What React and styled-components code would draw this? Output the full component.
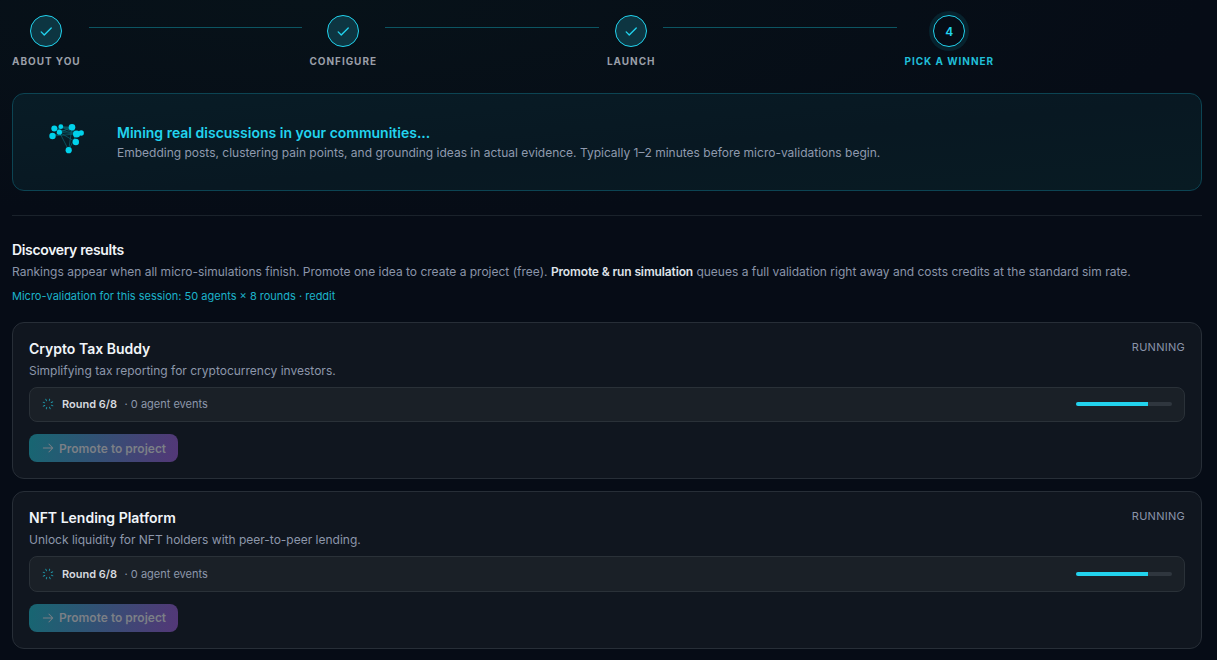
import React from 'react';
import styled, { createGlobalStyle, css } from 'styled-components';
import { PiCheckBold, PiArrowRight, PiSpinner } from 'react-icons/pi';

const GlobalStyle = createGlobalStyle`
  * {
    box-sizing: border-box;
  }

  body {
    margin: 0;
    min-height: 660px;
    background: radial-gradient(ellipse 900px 220px at 25% 0, #071219 0%, rgba(7, 18, 25, 0) 100%), #060c16;
    font-family: Inter, 'Liberation Sans', sans-serif;
    color: #f1f5f9;
    overflow: hidden;
  }

  p, h2, h3 {
    margin: 0;
  }
`;

const Page = styled.main`
  width: 1190px;
  margin-left: 12px;
  padding-top: 15px;
`;

const Steps = styled.ol`
  display: grid;
  grid-template-columns: repeat(4, 1fr);
  margin: 0;
  padding: 0;
  list-style: none;
`;

const Step = styled.li`
  display: flex;
  height: 54px;
`;

const StepMark = styled.div`
  display: flex;
  flex-direction: column;
  align-items: center;
  gap: 8px;
`;

const Circle = styled.span`
  display: flex;
  align-items: center;
  justify-content: center;
  width: 32px;
  height: 32px;
  border: 1px solid #22d3ee;
  border-radius: 50%;
  background: #0d3541;
  color: #22d3ee;
  font-size: 12px;
  font-weight: 600;

  ${({ $current }) =>
    $current &&
    css`
      background: #060c16;
      box-shadow: 0 0 0 4px #07222d;
    `}
`;

const StepLabel = styled.span`
  font-size: 10px;
  font-weight: 650;
  line-height: 13px;
  letter-spacing: 0.95px;
  text-transform: uppercase;
  white-space: nowrap;
  color: ${({ $current }) => ($current ? '#20bfd8' : '#9a9fa8')};
`;

const StepLine = styled.span`
  flex: 1;
  height: 1px;
  margin: 12px 8px 0;
  background: #0c5562;
`;

const Banner = styled.section`
  display: flex;
  align-items: center;
  height: 98px;
  margin-top: 24px;
  padding: 2px 0 0 23px;
  border: 1px solid #0c4453;
  border-radius: 12px;
  background: linear-gradient(175deg, #081c26 0%, #081822 55%, #081b23 100%);
`;

const Network = styled.svg`
  width: 64px;
  height: 56px;
  margin: -10px 17px 0 0;
`;

const BannerTitle = styled.p`
  color: #22d3ee;
  font-size: 14px;
  font-weight: 600;
  line-height: 20px;
`;

const BannerText = styled.p`
  color: #8f9aae;
  font-size: 12px;
  line-height: 20px;
`;

const Results = styled.section`
  margin-top: 24px;
  padding-top: 24px;
  border-top: 1px solid #1a222b;
`;

const ResultsTitle = styled.h2`
  font-size: 14px;
  font-weight: 600;
  line-height: 20px;
  letter-spacing: -0.35px;
`;

const ResultsText = styled.p`
  margin-top: 2px;
  color: #8a94a9;
  font-size: 12px;
  line-height: 20px;

  strong {
    color: #dfe2e8;
    font-weight: 600;
    letter-spacing: -0.13px;
  }
`;

const SessionNote = styled.p`
  margin-top: 6px;
  color: #1cb3ca;
  font-size: 11px;
  line-height: 17px;
`;

const Cards = styled.div`
  display: grid;
  gap: 12px;
  margin-top: 16.9px;
`;

const Card = styled.article`
  height: 157.5px;
  padding: 16px;
  border: 1px solid #272e37;
  border-radius: 12px;
  background: #10161f;
`;

const CardHead = styled.header`
  display: flex;
  justify-content: space-between;
`;

const CardTitle = styled.h3`
  margin-bottom: 2px;
  font-size: 14px;
  font-weight: 600;
  line-height: 20px;
`;

const CardText = styled.p`
  color: #8d97ab;
  font-size: 12px;
  line-height: 20px;
`;

const Status = styled.span`
  color: #8a94a9;
  font-size: 11px;
  line-height: 17px;
  letter-spacing: 0.275px;
  text-transform: uppercase;
`;

const Progress = styled.div`
  display: flex;
  align-items: center;
  height: 35.5px;
  margin-top: 6px;
  padding: 0 12px 1px;
  border: 1px solid #2a3138;
  border-radius: 8px;
  background: #1a2027;
  color: #8d97ab;
  font-size: 11px;

  svg {
    margin-right: 7px;
    margin-left: -1px;
    color: #1e9fb3;
    transform: rotate(20deg);
  }
`;

const Round = styled.span`
  margin-right: 7.5px;
  color: #d6d9df;
  font-weight: 600;
`;

const Track = styled.div`
  width: 96px;
  height: 4px;
  margin-left: auto;
  border-radius: 2px;
  background: #2f363e;
  overflow: hidden;
`;

const Fill = styled.div`
  height: 100%;
  background: #22d3ee;
`;

const PromoteButton = styled.button`
  display: flex;
  align-items: center;
  gap: 4px;
  height: 28px;
  margin-top: 12px;
  padding: 0 12px;
  border: 0;
  border-radius: 8px;
  background: linear-gradient(100deg, #176672 0%, #533777 100%);
  color: #7b7f86;
  font-family: inherit;
  font-size: 12px;
  font-weight: 600;
`;

const nodes = [
  [18.3, 18.5, 3],
  [24.8, 16.7, 2.4],
  [36, 17.2, 3.3],
  [16.5, 26, 3.2],
  [23.4, 22.2, 2.6],
  [40.6, 24, 3.6],
  [45.2, 23, 2.7],
  [39.8, 32, 3.2],
  [32.7, 40.2, 3.1],
];

const links = [
  [0, 4], [0, 5], [1, 5], [1, 6], [2, 4], [2, 3], [4, 5], [3, 5],
  [4, 7], [4, 8], [2, 8], [5, 8], [2, 7], [0, 2], [1, 2],
];

const ideas = [
  {
    title: 'Crypto Tax Buddy',
    text: 'Simplifying tax reporting for cryptocurrency investors.',
  },
  {
    title: 'NFT Lending Platform',
    text: 'Unlock liquidity for NFT holders with peer-to-peer lending.',
  },
];

const steps = ['About you', 'Configure', 'Launch', 'Pick a winner'];

const NetworkIcon = () => (
  <Network viewBox="0 0 64 56">
    {links.map(([a, b]) => (
      <line
        key={`${a}-${b}`}
        x1={nodes[a][0]}
        y1={nodes[a][1]}
        x2={nodes[b][0]}
        y2={nodes[b][1]}
        stroke="#086572"
        strokeWidth="0.7"
      />
    ))}
    {nodes.map(([x, y, r]) => (
      <circle key={`${x}-${y}`} cx={x} cy={y} r={r} fill="#00d2eb" />
    ))}
  </Network>
);

const IdeaCard = ({ title, text }) => (
  <Card>
    <CardHead>
      <div>
        <CardTitle>{title}</CardTitle>
        <CardText>{text}</CardText>
      </div>
      <Status>Running</Status>
    </CardHead>
    <Progress>
      <PiSpinner size={14} />
      <Round>Round 6/8</Round>
      <span>· 0 agent events</span>
      <Track>
        <Fill style={{ width: `${(6 / 8) * 100}%` }} />
      </Track>
    </Progress>
    <PromoteButton disabled>
      <PiArrowRight size={14} />
      Promote to project
    </PromoteButton>
  </Card>
);

const App = () => {
  const last = steps.length - 1;
  return (
    <>
      <GlobalStyle />
      <Page>
        <Steps>
          {steps.map((label, i) => (
            <Step key={label}>
              <StepMark>
                <Circle $current={i === last}>
                  {i === last ? i + 1 : <PiCheckBold size={14} />}
                </Circle>
                <StepLabel $current={i === last}>{label}</StepLabel>
              </StepMark>
              {i < last && <StepLine />}
            </Step>
          ))}
        </Steps>
        <Banner>
          <NetworkIcon />
          <div>
            <BannerTitle>Mining real discussions in your communities...</BannerTitle>
            <BannerText>
              Embedding posts, clustering pain points, and grounding ideas in actual evidence. Typically
              1–2 minutes before micro-validations begin.
            </BannerText>
          </div>
        </Banner>
        <Results>
          <ResultsTitle>Discovery results</ResultsTitle>
          <ResultsText>
            Rankings appear when all micro-simulations finish. Promote one idea to create a project
            (free). <strong>Promote &amp; run simulation</strong> queues a full validation right away
            and costs credits at the standard sim rate.
          </ResultsText>
          <SessionNote>
            Micro-validation for this session: 50 agents × 8 rounds · reddit
          </SessionNote>
          <Cards>
            {ideas.map((idea) => (
              <IdeaCard key={idea.title} {...idea} />
            ))}
          </Cards>
        </Results>
      </Page>
    </>
  );
};

export default App;
